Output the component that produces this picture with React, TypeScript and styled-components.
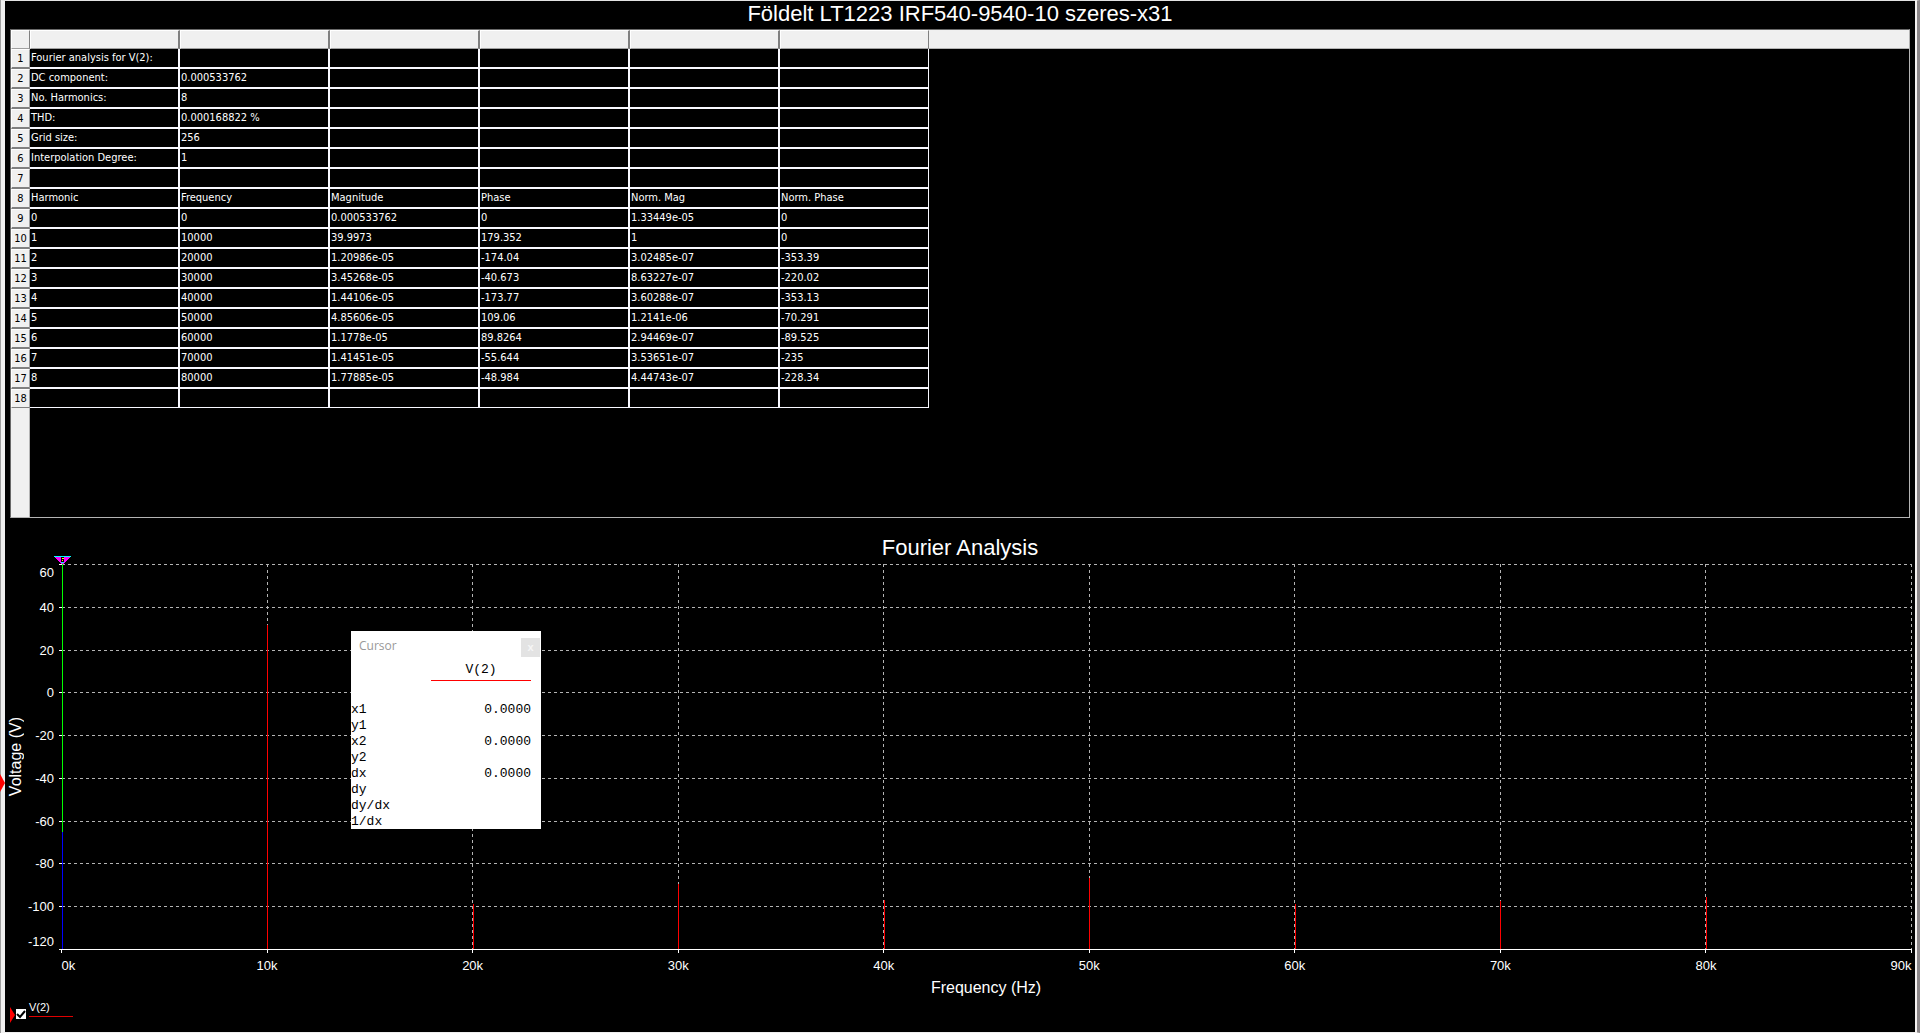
import React from "react";
import styled, { createGlobalStyle } from "styled-components";

const SANS = '"Liberation Sans", Arial, sans-serif';
const TABLE_FONT = '"DejaVu Sans Condensed", "DejaVu Sans", Tahoma, sans-serif';
const MONO = '"Liberation Mono", "Courier New", monospace';

const GlobalStyle = createGlobalStyle`
  * { box-sizing: border-box; }
  body { margin: 0; background: #000; color: #fff; font-family: ${SANS}; }
`;

const Frame = styled.main`
  position: relative;
  display: flex;
  flex-direction: column;
  min-height: 100vh;
  background: #000;
  border-style: solid;
  border-width: 1px 5px 1px 5px;
  border-color: #e3e3e3 #8c8789 #f0f0f0 #f0f0f0;
  &::before, &::after {
    content: "";
    position: absolute;
    top: -1px;
    bottom: -1px;
  }
  &::before {
    left: -5px;
    width: 1px;
    background: #a0a0a0;
  }
  &::after {
    right: -2px;
    width: 2px;
    background: #f5f2f1;
  }
`;

const RangeMarker = styled.svg`
  position: absolute;
  left: -5px;
  top: 772px;
  width: 5px;
  height: 20px;
`;

const Title = styled.h1`
  margin: 0;
  height: 28px;
  font-size: 22px;
  line-height: 26px;
  font-weight: 400;
  text-align: center;
`;

const Sheet = styled.section`
  display: flex;
  flex-direction: column;
  height: 489px;
  margin: 0 5px;
  border: 1px solid #b4b4b4;
  border-top-color: #696969;
  border-left-color: #696969;
  background: linear-gradient(#f0f0f0, #f0f0f0) 0 0 / 18px 100% no-repeat,
    linear-gradient(#f0f0f0, #f0f0f0) 0 0 / 100% 18px no-repeat,
    linear-gradient(#b4b4b4, #b4b4b4) 18px 0 / 1px 100% no-repeat,
    linear-gradient(#b4b4b4, #b4b4b4) 0 18px / 100% 1px no-repeat;
`;

const Table = styled.table`
  width: 918px;
  table-layout: fixed;
  border-collapse: separate;
  border-spacing: 0;
  font: 11px/16px ${TABLE_FONT};
`;

const NumberCol = styled.col`
  width: 19px;
`;

const DataCol = styled.col`
  width: 150px;
  &:last-child { width: 149px; }
`;

const HeadCell = styled.th`
  height: 19px;
  padding: 0;
  background: #f0f0f0;
  border: 1px solid #fff;
  border-right: 2px solid #808080;
  border-bottom: 1px solid #a0a0a0;
  &:first-child { border-right-width: 1px; }
  &:last-child { border-right-width: 1px; }
`;

const RowNumber = styled.th`
  height: 20px;
  padding: 0;
  background: #f0f0f0;
  color: #000;
  border: 1px solid #fff;
  border-right-color: #a0a0a0;
  border-bottom: 2px solid #808080;
  font-weight: 400;
  text-align: center;
  tr:last-child & { height: 19px; border-bottom-width: 1px; }
`;

const Cell = styled.td`
  padding: 1px 0 0 1px;
  background: #000;
  border-right: 2px solid #f8f8ff;
  border-bottom: 2px solid #f8f8ff;
  white-space: nowrap;
  vertical-align: top;
  &:last-child { border-right-width: 1px; }
  tr:last-child & { border-bottom-width: 1px; }
`;

const ChartSection = styled.section`
  display: flex;
  flex-direction: column;
  flex: 1;
`;

const ChartTitle = styled.h2`
  margin: 0;
  padding-top: 18px;
  height: 46px;
  font-size: 22px;
  line-height: 24px;
  font-weight: 400;
  text-align: center;
`;

const ChartBody = styled.div`
  position: relative;
  display: grid;
  grid-template-columns: 56px 1fr;
  margin-right: 4px;
`;

const AxisTitle = styled.div`
  font-size: 16px;
  line-height: 20px;
`;

const YTitle = styled(AxisTitle)`
  writing-mode: vertical-rl;
  transform: rotate(180deg);
  justify-self: start;
  align-self: center;
  line-height: 22px;
  width: 22px;
`;

const XTitle = styled(AxisTitle)`
  grid-column: 2;
  padding-top: 28px;
  text-align: center;
`;

const Plot = styled.svg`
  display: block;
  width: 100%;
  height: 386px;
  overflow: visible;
  font: 13px ${SANS};
  fill: #fff;
`;

const CursorPanel = styled.aside`
  position: absolute;
  left: 346px;
  top: 67px;
  width: 190px;
  height: 198px;
  padding-top: 7px;
  background: #fff;
  color: #000;
  font: 13px/16px ${MONO};
`;

const CursorHead = styled.header`
  display: flex;
  justify-content: space-between;
  height: 19px;
  padding: 0 1px 0 8px;
  color: #999;
  font: 12px/16px "Open Sans", sans-serif;
`;

const CloseButton = styled.button`
  width: 19px;
  height: 19px;
  padding: 0;
  border: 0;
  background: #e3e3e3;
  color: #f6f6f6;
  font: 700 11px/19px ${SANS};
`;

const CursorTrace = styled.div`
  width: 100px;
  height: 20px;
  margin: 4px 10px 21px auto;
  line-height: 17px;
  border-bottom: 1px solid #f00;
  text-align: center;
`;

const Readings = styled.dl`
  margin: 0;
  display: grid;
  grid-template-columns: 1fr 100px;
  grid-auto-rows: 16px;
  padding-right: 10px;
`;

const ReadingName = styled.dt``;

const ReadingValue = styled.dd`
  margin: 0;
  text-align: right;
`;

const Legend = styled.footer`
  display: flex;
  align-items: flex-start;
  margin: 2px 0 0 5px;
`;

const LegendArrow = styled.svg`
  width: 5px;
  height: 16px;
  margin: 7px 1px 0 0;
`;

const CheckWrap = styled.span`
  display: grid;
  margin: 9px 3px 0 0;
  & > * { grid-area: 1 / 1; }
`;

const Check = styled.input`
  appearance: none;
  width: 10px;
  height: 10px;
  margin: 0;
  background: #fff;
`;

const CheckMark = styled.svg`
  width: 10px;
  height: 10px;
  pointer-events: none;
`;

const TraceLabel = styled.label`
  width: 44px;
  height: 17px;
  border-bottom: 1px solid #e00000;
  font-size: 11px;
  line-height: 14px;
`;

const COLUMNS = 6;
const ROWS: string[][] = [
  ["Fourier analysis for V(2):"],
  ["DC component:", "0.000533762"],
  ["No. Harmonics:", "8"],
  ["THD:", "0.000168822 %"],
  ["Grid size:", "256"],
  ["Interpolation Degree:", "1"],
  [],
  ["Harmonic", "Frequency", "Magnitude", "Phase", "Norm. Mag", "Norm. Phase"],
  ["0", "0", "0.000533762", "0", "1.33449e-05", "0"],
  ["1", "10000", "39.9973", "179.352", "1", "0"],
  ["2", "20000", "1.20986e-05", "-174.04", "3.02485e-07", "-353.39"],
  ["3", "30000", "3.45268e-05", "-40.673", "8.63227e-07", "-220.02"],
  ["4", "40000", "1.44106e-05", "-173.77", "3.60288e-07", "-353.13"],
  ["5", "50000", "4.85606e-05", "109.06", "1.2141e-06", "-70.291"],
  ["6", "60000", "1.1778e-05", "89.8264", "2.94469e-07", "-89.525"],
  ["7", "70000", "1.41451e-05", "-55.644", "3.53651e-07", "-235"],
  ["8", "80000", "1.77885e-05", "-48.984", "4.44743e-07", "-228.34"],
  [],
];

const Y_MAX = 60;
const Y_MIN = -120;
const Y_TICKS = [60, 40, 20, 0, -20, -40, -60, -80, -100, -120];
const X_TICKS = [0, 10, 20, 30, 40, 50, 60, 70, 80, 90];
const PLOT_HEIGHT = 385;
const AMPLITUDES = [39.9973, 1.20986e-5, 3.45268e-5, 1.44106e-5, 4.85606e-5, 1.1778e-5, 1.41451e-5, 1.77885e-5];

const yFor = (v: number) => Math.round(((Y_MAX - v) / (Y_MAX - Y_MIN)) * PLOT_HEIGHT) + 0.5;
const xFor = (k: number) => `${(k / 90) * 100}%`;
const decibels = (a: number) => 20 * Math.log10(a);

const GRID = { stroke: "#b4b4b4", strokeWidth: 1, strokeDasharray: "3 3", shapeRendering: "crispEdges" as const };
const SOLID = { strokeWidth: 1, shapeRendering: "crispEdges" as const };

function labelY(v: number) {
  if (v === Y_MAX) return yFor(v) + 12;
  if (v === Y_MIN) return yFor(v) - 4;
  return yFor(v) + 4;
}

function SpectrumPlot() {
  return (
    <Plot role="img" aria-label="Fourier Analysis">
      {Y_TICKS.slice(0, -1).map((v) => (
        <line key={v} x1="1" x2="100%" y1={yFor(v)} y2={yFor(v)} {...GRID} />
      ))}
      <g transform="translate(0.5 0)">
        {X_TICKS.slice(1).map((k) => (
          <line key={k} x1={xFor(k)} x2={xFor(k)} y1="0" y2={PLOT_HEIGHT} {...GRID} />
        ))}
      </g>
      <g transform="translate(1 0)">
        {AMPLITUDES.map((a, i) => (
          <line key={i} x1={xFor((i + 1) * 10)} x2={xFor((i + 1) * 10)} y1={yFor(decibels(a))} y2={PLOT_HEIGHT} stroke="#f00" {...SOLID} />
        ))}
      </g>
      <line x1="1.5" x2="1.5" y1="0" y2="268" stroke="#0f0" {...SOLID} />
      <line x1="1.5" x2="1.5" y1="268" y2={PLOT_HEIGHT} stroke="#00f" {...SOLID} />
      <line x1="-2" x2="100%" y1={PLOT_HEIGHT + 0.5} y2={PLOT_HEIGHT + 0.5} stroke="#fff" {...SOLID} />
      {Y_TICKS.map((v) => (
        <g key={v}>
          <line x1="-2" x2="1" y1={yFor(v)} y2={yFor(v)} stroke="#fff" {...SOLID} />
          <text x="-7" y={labelY(v)} textAnchor="end">{v}</text>
        </g>
      ))}
      <g transform="translate(0.5 0)">
        {X_TICKS.map((k) => (
          <g key={k}>
            <line x1={xFor(k)} x2={xFor(k)} y1={PLOT_HEIGHT} y2={PLOT_HEIGHT + 4} stroke="#fff" {...SOLID} />
            <text x={xFor(k)} y={PLOT_HEIGHT + 21} textAnchor={k === 0 ? "start" : k === 90 ? "end" : "middle"}>{k}k</text>
          </g>
        ))}
      </g>
      <g shapeRendering="crispEdges">
        <path d="M-7 -8H10V-7H-7Z" fill="#0ff" />
        <path d="M-6 -7H9V-6H8V-5H7V-4H6V-3H5V-2H4V-1H3V0H0V-1H-1V-2H-2V-3H-3V-4H-4V-5H-5V-6H-6Z" fill="#f0f" />
        <path d="M0 -7H3V-2H0Z" fill="#000" />
        <path d="M1 -6H3V-5H1ZM1 -4H2V-3H1Z" fill="#ff0" />
        <path d="M0 -2H3V-1H0Z" fill="#0ff" />
      </g>
    </Plot>
  );
}

const READINGS: [string, string][] = [
  ["x1", "0.0000"],
  ["y1", ""],
  ["x2", "0.0000"],
  ["y2", ""],
  ["dx", "0.0000"],
  ["dy", ""],
  ["dy/dx", ""],
  ["1/dx", ""],
];

export default function App() {
  return (
    <>
      <GlobalStyle />
      <Frame>
        <RangeMarker viewBox="0 0 5 20" aria-hidden="true">
          <path d="M0 1L5 10L0 19Z" fill="#f00" />
        </RangeMarker>
        <Title>Földelt LT1223 IRF540-9540-10 szeres-x31</Title>
        <Sheet>
          <Table>
            <colgroup>
              <NumberCol />
              {Array.from({ length: COLUMNS }, (_, i) => <DataCol key={i} />)}
            </colgroup>
            <thead>
              <tr>
                {Array.from({ length: COLUMNS + 1 }, (_, i) => <HeadCell key={i} />)}
              </tr>
            </thead>
            <tbody>
              {ROWS.map((row, r) => (
                <tr key={r}>
                  <RowNumber scope="row">{r + 1}</RowNumber>
                  {Array.from({ length: COLUMNS }, (_, c) => <Cell key={c}>{row[c]}</Cell>)}
                </tr>
              ))}
            </tbody>
          </Table>
        </Sheet>
        <ChartSection>
          <ChartTitle>Fourier Analysis</ChartTitle>
          <ChartBody>
            <YTitle>Voltage (V)</YTitle>
            <SpectrumPlot />
            <XTitle>Frequency (Hz)</XTitle>
            <CursorPanel>
              <CursorHead>
                <span>Cursor</span>
                <CloseButton type="button" aria-label="Close">x</CloseButton>
              </CursorHead>
              <CursorTrace>V(2)</CursorTrace>
              <Readings>
                {READINGS.map(([name, value]) => (
                  <React.Fragment key={name}>
                    <ReadingName>{name}</ReadingName>
                    <ReadingValue>{value}</ReadingValue>
                  </React.Fragment>
                ))}
              </Readings>
            </CursorPanel>
          </ChartBody>
          <Legend>
            <LegendArrow viewBox="0 0 5 16" aria-hidden="true">
              <path d="M0 0L5 8L0 16Z" fill="#f00" />
            </LegendArrow>
            <CheckWrap>
              <Check type="checkbox" id="trace-v2" defaultChecked />
              <CheckMark viewBox="0 0 10 10" aria-hidden="true">
                <path d="M1 5L4 8L9 2" fill="none" stroke="#000" strokeWidth="2" />
              </CheckMark>
            </CheckWrap>
            <TraceLabel htmlFor="trace-v2">V(2)</TraceLabel>
          </Legend>
        </ChartSection>
      </Frame>
    </>
  );
}
